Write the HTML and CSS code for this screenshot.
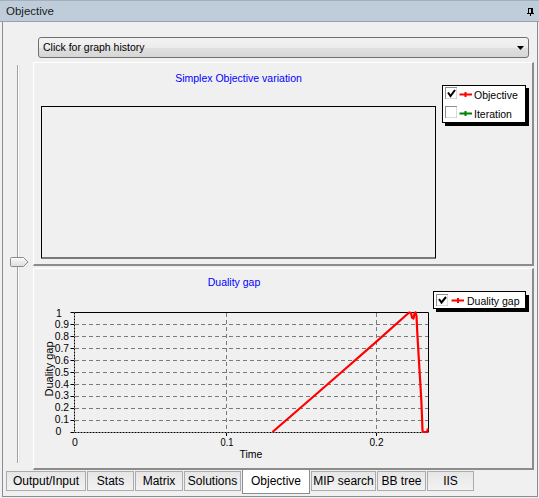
FILE: index.html
```html
<!DOCTYPE html>
<html>
<head>
<meta charset="utf-8">
<title>Objective</title>
<link rel="stylesheet" href="styles.css">
</head>
<body>
<div class="titlebar">
  <span class="title">Objective</span>
  <svg class="pin" width="7" height="8" viewBox="0 0 7 8" shape-rendering="crispEdges">
    <rect x="1" y="0" width="5" height="1" fill="#000"/>
    <rect x="1" y="0" width="1" height="5" fill="#000"/>
    <rect x="4" y="0" width="2" height="5" fill="#000"/>
    <rect x="0" y="5" width="7" height="1" fill="#000"/>
    <rect x="3" y="6" width="1" height="2" fill="#000"/>
  </svg>
</div>
<div class="frame">
  <div class="combo">
    <span class="combo-text">Click for graph history</span>
    <svg class="arrow" width="7" height="4" viewBox="0 0 7 4"><polygon points="0,0 7,0 3.5,4" fill="#000"/></svg>
  </div>
  <div class="main">
    <div class="slider">
      <div class="track"></div>
      <svg class="thumb" width="19" height="10" viewBox="0 0 19 10">
        <defs>
          <linearGradient id="tg" x1="0" y1="0" x2="0" y2="1">
            <stop offset="0" stop-color="#fbfbfb"/>
            <stop offset="1" stop-color="#dcdcdc"/>
          </linearGradient>
        </defs>
        <path d="M1.5,0.5 H13.5 L18,5 L13.5,9.5 H1.5 Q0.5,9.5 0.5,8.5 V1.5 Q0.5,0.5 1.5,0.5 Z" fill="url(#tg)" stroke="#8a8a8a"/>
      </svg>
    </div>
    <div class="panels">
      <div class="panel upper">
        <svg class="chart" width="498" height="201" viewBox="34 63 498 201">
          <text class="ctitle" x="238.5" y="82" text-anchor="middle">Simplex Objective variation</text>
          <rect x="41.5" y="106.5" width="394" height="151.5" fill="none" stroke="#000"/>
          <rect x="445" y="88" width="84" height="38" fill="#000"/>
          <rect x="442.5" y="85.5" width="83" height="37" fill="#fff" stroke="#000"/>
          <rect x="445.5" y="87.5" width="11" height="11" fill="#fff" stroke="#8e8e8e"/>
          <path d="M446 98.5 H456.5 V88" fill="none" stroke="#dadada"/>
          <path d="M448 92.5 L450.5 96 L455 90" fill="none" stroke="#000" stroke-width="2"/>
          <path d="M459.5 94.5 H472" stroke="#ff0000" stroke-width="2"/>
          <path d="M465.5 92 V97" stroke="#ff0000" stroke-width="2"/>
          <text class="legend" x="474" y="98.5">Objective</text>
          <rect x="445.5" y="106.5" width="11" height="11" fill="#fff" stroke="#8e8e8e"/>
          <path d="M446 117.5 H456.5 V107" fill="none" stroke="#dadada"/>
          <path d="M459.5 113.5 H472" stroke="#008000" stroke-width="2"/>
          <path d="M465.5 111 V116" stroke="#008000" stroke-width="2"/>
          <text class="legend" x="474" y="117.5">Iteration</text>
        </svg>
      </div>
      <div class="panel lower">
        <svg class="chart" width="498" height="199" viewBox="34 269 498 199">
          <text class="ctitle" x="234" y="286" text-anchor="middle">Duality gap</text>
          <path d="M75 324.5H428 M75 336.5H428 M75 348.5H428 M75 360.5H428 M75 372.5H428 M75 384.5H428 M75 396.5H428 M75 408.5H428 M75 420.5H428 M226.5 313V432 M376.5 313V432" stroke="#7a7a7a" stroke-dasharray="4 3" fill="none"/>
          <path d="M74.5 312.5 H428.5 V432.5" fill="none" stroke="#000"/>
          <path d="M74.5 312.5 V432.5 H428.5" fill="none" stroke="#000" stroke-dasharray="2 1"/>
          <path d="M70.5 312.5H74 M70.5 324.5H74 M70.5 336.5H74 M70.5 348.5H74 M70.5 360.5H74 M70.5 372.5H74 M70.5 384.5H74 M70.5 396.5H74 M70.5 408.5H74 M70.5 420.5H74 M70.5 432.5H74 M226.5 433V436 M376.5 433V436" stroke="#000" fill="none"/>
          <text class="tick" x="56" y="317">1</text>
          <text class="tick" x="54.7" y="328.3" textLength="14.3" lengthAdjust="spacingAndGlyphs">0.9</text>
          <text class="tick" x="54.7" y="340.2" textLength="14.3" lengthAdjust="spacingAndGlyphs">0.8</text>
          <text class="tick" x="54.7" y="352.3" textLength="14.3" lengthAdjust="spacingAndGlyphs">0.7</text>
          <text class="tick" x="54.7" y="364.3" textLength="14.3" lengthAdjust="spacingAndGlyphs">0.6</text>
          <text class="tick" x="54.7" y="376.1" textLength="14.3" lengthAdjust="spacingAndGlyphs">0.5</text>
          <text class="tick" x="54.7" y="387.8" textLength="14.3" lengthAdjust="spacingAndGlyphs">0.4</text>
          <text class="tick" x="54.7" y="399.4" textLength="14.3" lengthAdjust="spacingAndGlyphs">0.3</text>
          <text class="tick" x="54.7" y="411.1" textLength="14.3" lengthAdjust="spacingAndGlyphs">0.2</text>
          <text class="tick" x="54.7" y="422.8" textLength="14.3" lengthAdjust="spacingAndGlyphs">0.1</text>
          <text class="tick" x="55.6" y="435">0</text>
          <text class="tick" x="74.8" y="446.3" text-anchor="middle">0</text>
          <text class="tick" x="227" y="446.3" text-anchor="middle" textLength="13" lengthAdjust="spacingAndGlyphs">0.1</text>
          <text class="tick" x="376.5" y="446.3" text-anchor="middle" textLength="14" lengthAdjust="spacingAndGlyphs">0.2</text>
          <text class="axis" x="251" y="457.5" text-anchor="middle">Time</text>
          <text class="axis ytitle" transform="translate(52.6 369) rotate(-90)" text-anchor="middle">Duality gap</text>
          <polyline points="272.5,432 306,403 340,373.5 375,342.8 408,313.5 409.5,312.5 411,313 412,317.5 413.5,318.5 414.5,313.5 415.5,312.3 416.5,316 417.3,333 418.3,350 419.3,367 420.3,383 421.3,400 422,417 422.5,431 423.5,432 427,432 428,428.5" fill="none" stroke="#ff0000" stroke-width="2.2" stroke-linejoin="round"/>
          <rect x="436" y="295" width="93" height="17" fill="#000"/>
          <rect x="433.5" y="291.5" width="92" height="17" fill="#fff" stroke="#000"/>
          <rect x="436.5" y="294.5" width="11" height="11" fill="#fff" stroke="#8e8e8e"/>
          <path d="M437 305.5 H447.5 V295" fill="none" stroke="#dadada"/>
          <path d="M439 299 L441.5 302.5 L446 297" fill="none" stroke="#000" stroke-width="2"/>
          <path d="M451.5 300.5 H464" stroke="#ff0000" stroke-width="2"/>
          <path d="M458 298 V303" stroke="#ff0000" stroke-width="2"/>
          <text class="legend" x="467" y="304.6">Duality gap</text>
        </svg>
      </div>
    </div>
  </div>
  <div class="tabs">
    <div class="tab">Output/Input</div>
    <div class="tab">Stats</div>
    <div class="tab">Matrix</div>
    <div class="tab">Solutions</div>
    <div class="tab active">Objective</div>
    <div class="tab">MIP search</div>
    <div class="tab">BB tree</div>
    <div class="tab">IIS</div>
  </div>
</div>
</body>
</html>
```
FILE: styles.css
```css
* { box-sizing: border-box; }
html, body { margin: 0; padding: 0; }
body {
  background: #f0f0f0;
  font-family: "Liberation Sans", Arial, sans-serif;
  width: 539px;
  height: 498px;
  overflow: hidden;
  color: #000;
}
.titlebar {
  height: 22px;
  background: #bfcddb;
  border-top: 1px solid #a3afbb;
  border-bottom: 1px solid #98a2ad;
  display: flex;
  align-items: center;
  justify-content: space-between;
  padding: 0 5px 0 6px;
}
.title {
  font-size: 11.5px;
  line-height: 20px;
  color: #1b1b1b;
}
.pin { display: block; margin-top: 1px; }
.frame {
  margin: 0 1px 1px 2px;
  height: 475px;
  border: 1px solid #898c95;
  border-top: none;
  display: flex;
  flex-direction: column;
}
.combo {
  margin: 15px 0 0 35px;
  width: 491px;
  height: 21px;
  border: 1px solid #707070;
  border-radius: 3px;
  background: linear-gradient(#f3f3f3 0%, #ececec 50%, #e0e0e0 52%, #d6d6d6 100%);
  display: flex;
  align-items: center;
  justify-content: space-between;
  padding: 0 4px 0 4px;
}
.combo-text { font-size: 10.5px; line-height: 19px; }
.arrow { display: block; margin-top: 1px; }
.main {
  display: flex;
  margin-top: 4px;
  height: 408px;
}
.slider {
  position: relative;
  width: 30px;
}
.track {
  margin: 3px 0 0 14px;
  width: 3px;
  height: 398px;
  border-left: 1px solid #a0a0a0;
  border-right: 1px solid #e6e6e6;
  background: #ffffff;
}
.thumb {
  position: absolute;
  left: 7px;
  top: 195px;
  display: block;
}
.panels {
  width: 501px;
  display: flex;
  flex-direction: column;
  gap: 2px;
}
.panel {
  border-top: 1px solid #ffffff;
  border-left: 1px solid #ffffff;
  border-right: 2px solid #8c8c8c;
  border-bottom: 2px solid #8c8c8c;
}
.upper { height: 204px; }
.lower { height: 202px; }
.chart { display: block; }
.chart text { font-family: "Liberation Sans", Arial, sans-serif; fill: #000; }
.chart .ctitle { font-size: 10.5px; fill: #0000ff; }
.chart .legend { font-size: 10.5px; }
.chart .tick { font-size: 10.5px; }
.chart .axis { font-size: 10.5px; }
.chart .ytitle { font-size: 11px; }
.tabs {
  display: grid;
  grid-template-columns: 80px 47px 48px 57px 68px 65px 49px 47px;
  column-gap: 1px;
  padding-left: 3px;
  height: 26px;
  align-items: start;
}
.tab {
  margin-top: 1px;
  height: 20px;
  border: 1px solid #acacac;
  background: linear-gradient(#e6e6e6, #f2f2f2);
  font-size: 12px;
  line-height: 18px;
  text-align: center;
  white-space: nowrap;
}
.tab.active {
  margin-top: 0;
  height: 24px;
  border-top: none;
  border-color: #898c95;
  background: #ffffff;
  padding-top: 2px;
}
```
